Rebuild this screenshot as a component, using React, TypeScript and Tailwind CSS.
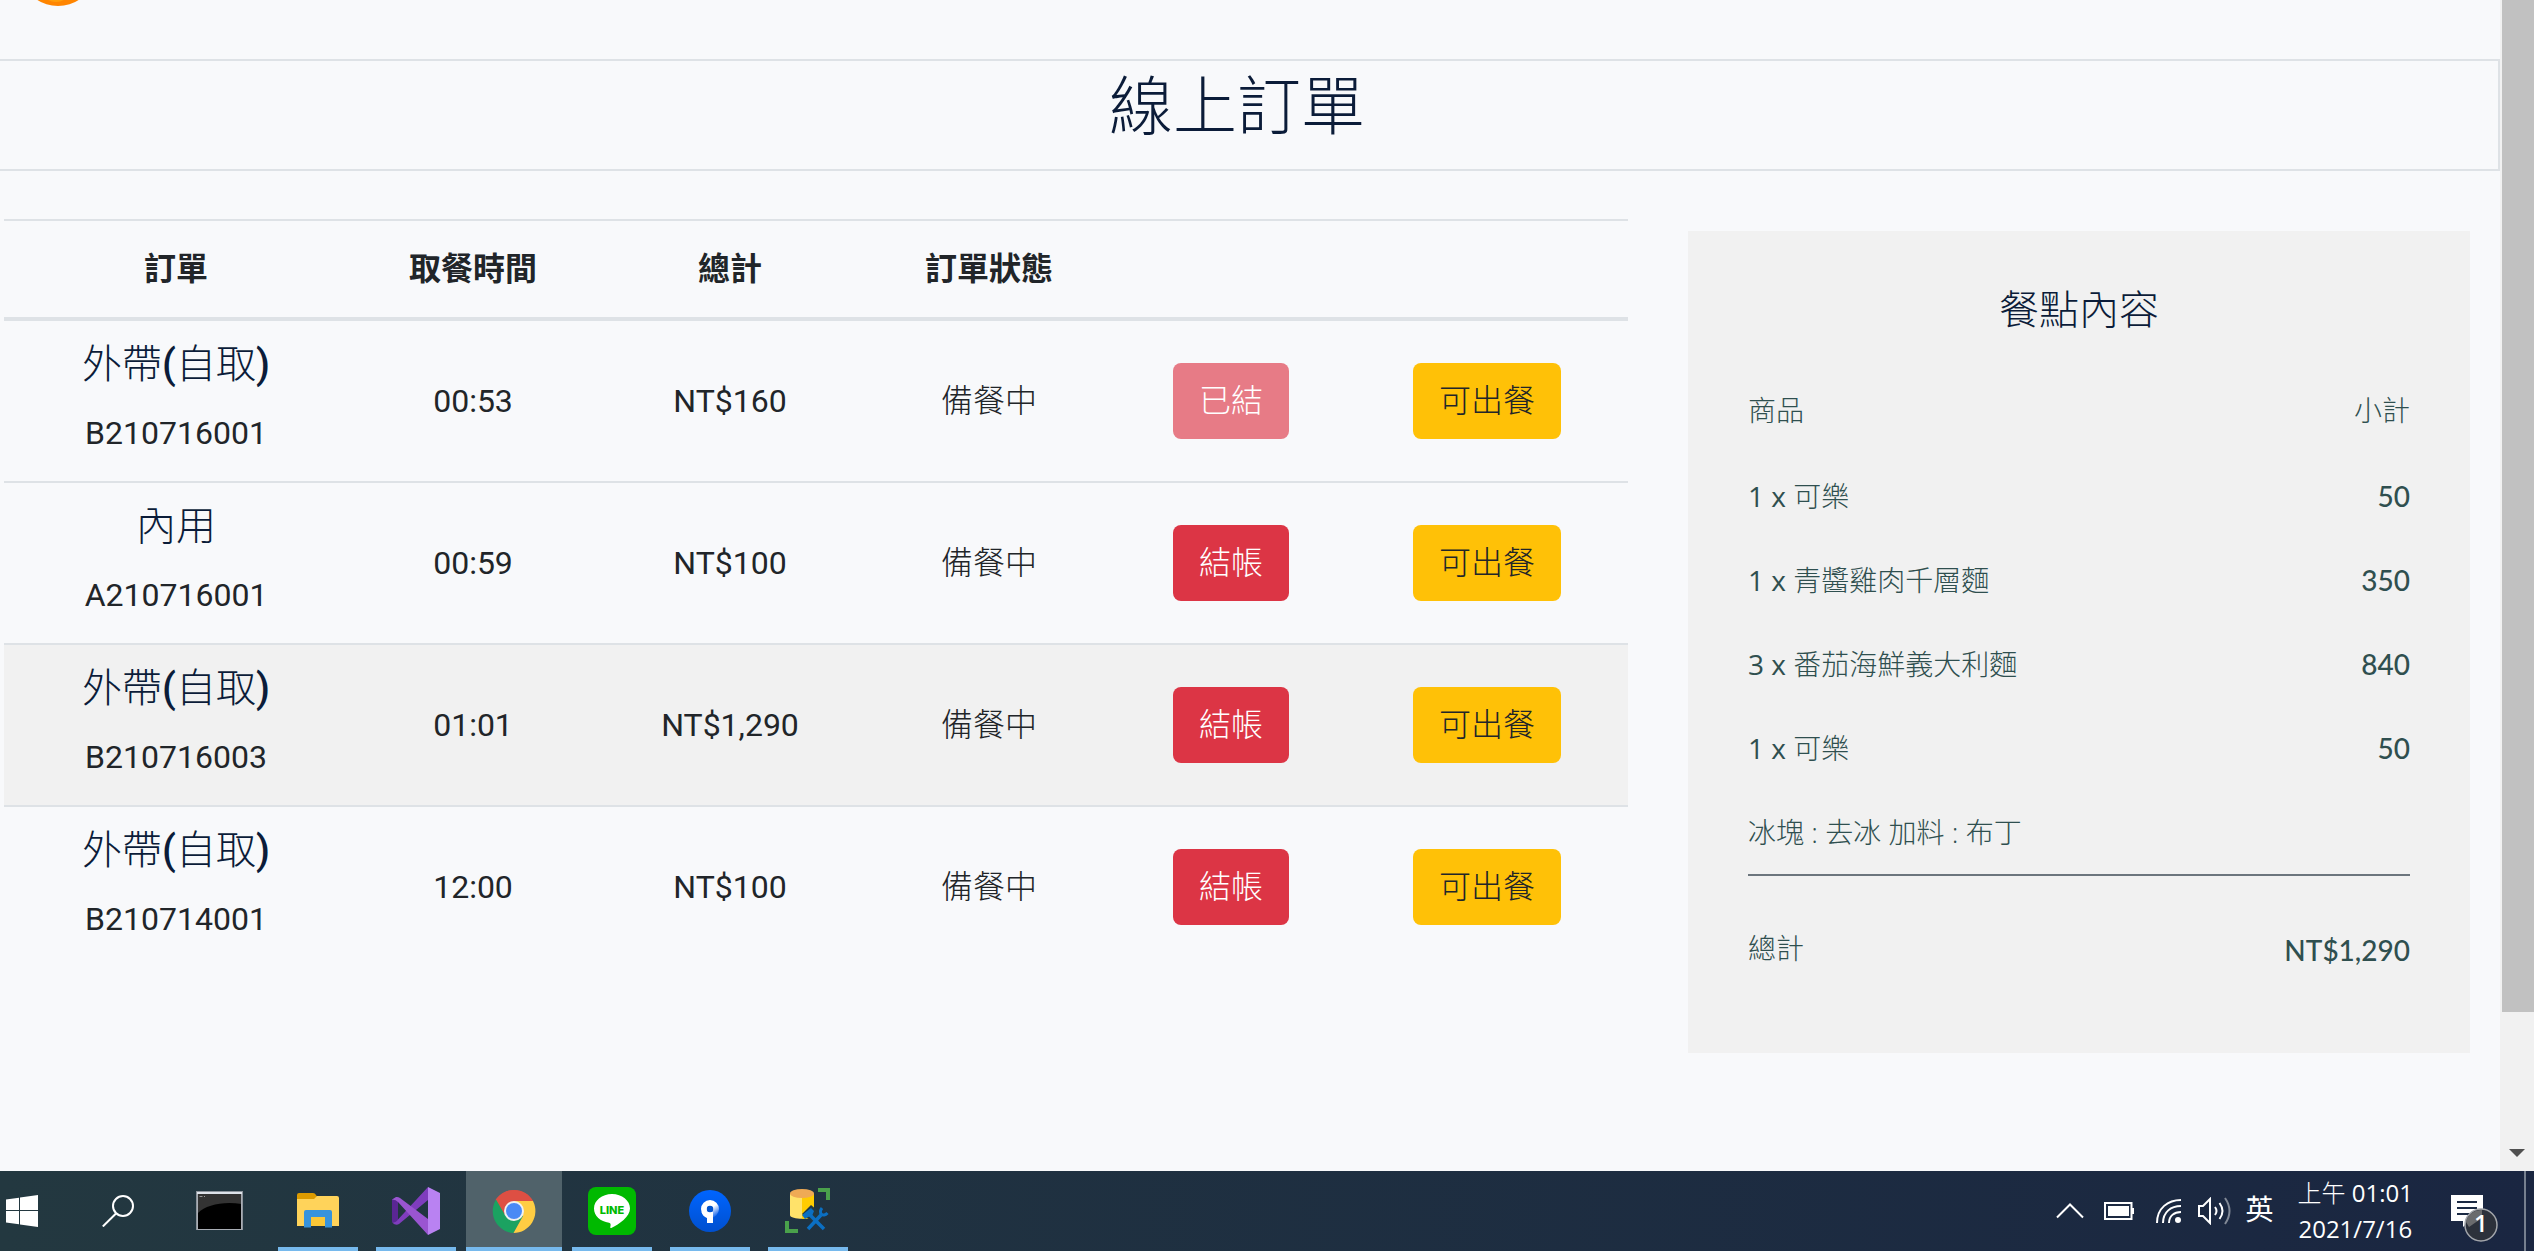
import React from "react";

const orders = [
  { type: "外帶(自取)", code: "B210716001", time: "00:53", total: "NT$160", paid: true },
  { type: "內用", code: "A210716001", time: "00:59", total: "NT$100" },
  { type: "外帶(自取)", code: "B210716003", time: "01:01", total: "NT$1,290", active: true },
  { type: "外帶(自取)", code: "B210714001", time: "12:00", total: "NT$100" },
];

const items = [
  { qty: 1, name: "可樂", price: "50" },
  { qty: 1, name: "青醬雞肉千層麵", price: "350" },
  { qty: 3, name: "番茄海鮮義大利麵", price: "840" },
  { qty: 1, name: "可樂", price: "50" },
];

function OrdersTable() {
  return (
    <table className="w-full table-fixed border-separate border-spacing-0 text-center text-[32px] leading-[48px] text-[#212529]">
      <colgroup>
        <col className="w-[344px]" />
        <col className="w-[250px]" />
        <col className="w-[264px]" />
        <col className="w-[254px]" />
        <col className="w-[230px]" />
        <col className="w-[282px]" />
      </colgroup>
      <thead>
        <tr>
          {["訂單", "取餐時間", "總計", "訂單狀態", "", ""].map((h, i) => (
            <th key={i} scope="col" className="h-[102px] border-t-2 border-b-4 border-[#dee2e6] p-0 font-bold">
              {h}
            </th>
          ))}
        </tr>
      </thead>
      <tbody className="[&>tr+tr>td]:border-t-2 [&>tr>td]:border-[#dee2e6] [&>tr>td]:p-0">
        {orders.map((o) => (
          <tr key={o.code} className={o.active ? "bg-[#f1f1f1]" : ""}>
            <td>
              <div className="py-6">
                <h5 className="mb-6 text-[40px] leading-10 font-light text-[#0b1c39]">
                  {o.type.split(/([()])/).map((part, i) => (
                    <span key={i} className={part === "(" || part === ")" ? "font-medium" : ""}>{part}</span>
                  ))}
                </h5>
                <p>{o.code}</p>
              </div>
            </td>
            <td>{o.time}</td>
            <td>{o.total}</td>
            <td className="font-light">備餐中</td>
            <td>
              <button
                type="button"
                disabled={o.paid}
                className={
                  o.paid
                    ? "h-[76px] rounded-lg bg-[#e77b86] px-[26px] font-light text-white"
                    : "h-[76px] rounded-lg bg-[#dc3545] px-[26px] font-light text-white"
                }
              >
                {o.paid ? "已結" : "結帳"}
              </button>
            </td>
            <td>
              <button type="button" className="h-[76px] rounded-lg bg-[#ffc107] px-[26px] font-light">
                可出餐
              </button>
            </td>
          </tr>
        ))}
      </tbody>
    </table>
  );
}

function OrderDetail() {
  return (
    <aside className="mt-3 bg-[#f1f1f1] px-[60px] pt-14 pb-[82px] text-[28px] leading-[42px] font-light text-[#2f4f4f]">
      <h4 className="mb-14 text-center text-[40px] leading-[48px] text-[#0b1c39]">餐點內容</h4>
      <div className="mb-[42px] flex justify-between">
        <span>商品</span>
        <span>小計</span>
      </div>
      {items.map((item, i) => (
        <div key={i} className="mb-[42px] flex justify-between">
          <span className="font-['Open_Sans','Noto_Sans_CJK_TC',sans-serif]">
            <span className="font-normal">{item.qty} x </span>
            {item.name}
          </span>
          <span className="font-[Lato,sans-serif] font-medium">{item.price}</span>
        </div>
      ))}
      <p className="border-b-2 border-[#6c757d] pb-[21px] font-['Open_Sans','Noto_Sans_CJK_TC',sans-serif]">冰塊 : 去冰 加料 : 布丁</p>
      <div className="mt-[53px] flex justify-between">
        <span>總計</span>
        <span className="font-[Lato,sans-serif] font-medium">NT$1,290</span>
      </div>
    </aside>
  );
}

const WindowsIcon = () => (
  <svg width="32" height="32" viewBox="0 0 32 32" fill="#fff">
    <path d="M0 4.6 13 2.8V15H0zM14 2.6 32 0v15H14zM0 16h13v13.2L0 27.4zM14 16h18v16l-18-2.6z" />
  </svg>
);

const SearchIcon = () => (
  <svg width="32" height="32" viewBox="0 0 32 32" fill="none" stroke="#fff" strokeWidth="2">
    <circle cx="21" cy="11" r="10" />
    <path d="M14 18.5.8 31.5" />
  </svg>
);

const TerminalIcon = () => (
  <svg width="48" height="40" viewBox="0 0 48 40">
    <rect x=".5" y=".5" width="46" height="38" fill="#000" stroke="#8d949c" />
    <path d="M2 3h43.500v10C27 10 10 14 2 22z" fill="#333" />
    <path d="M1 1h45v2H1z" fill="#dfe3ea" />
    <path d="M1.500 3v35.500h44V3" fill="none" stroke="#a9aeb5" />
    <path d="M3.500 5.500h3M8 5l1 1" stroke="#999" />
  </svg>
);

const FolderIcon = () => (
  <svg width="42" height="36" viewBox="0 0 42 36">
    <path d="M0 2q0-2 2-2h14q2 0 3 2l2 3-3 3H0z" fill="#dd9b00" />
    <path d="M0 6h17l3-3h20q2 0 2 2v28H0z" fill="#ffd35a" />
    <path d="M7 34V19q0-2 2-2h24q2 0 2 2v15.500h-7V24H14v10.500H7z" fill="#3793dc" />
    <path d="M14 24h14v9H14z" fill="#fbc736" />
  </svg>
);

const VisualStudioIcon = () => (
  <svg width="48" height="48" viewBox="0 0 48 48">
    <path d="M0 12 6 14v21l-1 2-5-2z" fill="#5a2694" />
    <path d="M36 0v13L7 37q-3 2-7-1.500 4 .5 6-3z" fill="#7f3dbd" />
    <path d="M0 12.500 4 10q2-.5 4 1l28 21v16L6 15q-2-2.500-6-2.500z" fill="#9a55d1" />
    <path d="m36 0 12 6v36l-12 6z" fill="#b982f2" />
  </svg>
);

const ChromeIcon = () => (
  <svg width="44" height="44" viewBox="0 0 44 44">
    <path d="M22 22 3.500 11A22 22 0 0 1 41 12z" fill="#de4f43" />
    <path d="M22 22 4 10.500A22 22 0 0 0 21.500 44L32 26z" fill="#1ba261" />
    <path d="M22 12h19A22 22 0 0 1 21.500 44L31 27z" fill="#ffcd43" />
    <path d="M22 12h19A22 22 0 0 0 4 10.500L13 26z" fill="#de4f43" />
    <circle cx="22" cy="22" r="10" fill="#f1f1f1" />
    <circle cx="22" cy="22" r="8" fill="#4a8af5" />
  </svg>
);

const LineIcon = () => (
  <svg width="48" height="48" viewBox="0 0 48 48">
    <rect width="48" height="48" rx="8" fill="#00b900" />
    <path d="M24 7C14 7 6 13.500 6 21.500c0 7.500 6.500 13 15 14.200 2 .5 1.800 2 1.300 4.300-.2 1 .5 1.300 1.500.8C31 37 42 30 42 21.500 42 13.500 34 7 24 7z" fill="#fff" />
    <text x="24" y="26.500" textAnchor="middle" fill="#00b900" className="font-[Inter,sans-serif] text-[11px] font-extrabold">LINE</text>
  </svg>
);

const SourcetreeIcon = () => (
  <svg width="42" height="42" viewBox="0 0 42 42">
    <defs>
      <linearGradient id="stBlue" x1="0" y1="0" x2="0" y2="1">
        <stop offset="0" stopColor="#0065ff" />
        <stop offset="1" stopColor="#0050cf" />
      </linearGradient>
      <linearGradient id="stFade" x1=".6" y1=".4" x2="1" y2="1">
        <stop offset="0" stopColor="#fff" />
        <stop offset="1" stopColor="#2b74ee" />
      </linearGradient>
    </defs>
    <circle cx="21" cy="21" r="21" fill="url(#stBlue)" />
    <circle cx="21" cy="19" r="6" fill="none" stroke="url(#stFade)" strokeWidth="6" />
    <path d="M18 22h6v11h-6zM12.500 22a9 9 0 0 0 5.500 6v-6z" fill="#fff" />
    <circle cx="21" cy="19" r="3.200" fill="#0052cc" />
  </svg>
);

const DatabaseIcon = () => (
  <svg width="46" height="46" viewBox="0 0 46 46">
    <path d="M5 6v21c0 5 24 5 24 0V6z" fill="#ffe26a" />
    <path d="M17 6h12v21q-4 4-12 4z" fill="#fc0" />
    <ellipse cx="17" cy="5.500" rx="12" ry="4.500" fill="#efaa55" />
    <path d="M33 2h10v10M2 33v10h11" fill="none" stroke="#4aa14b" strokeWidth="4" />
    <path d="M17 26 26 17l6 5 4 6-8 6z" fill="#233840" />
    <path d="m23 41 13-14M25 27l14 14" fill="none" stroke="#0b6fc2" strokeWidth="3.500" />
    <path d="m17 27 9-7 3 3-2 5-4 1-3 2z" fill="#0b6fc2" />
    <path d="M37 20c-4 5 1 10 5.500 5" fill="none" stroke="#0b6fc2" strokeWidth="3" />
  </svg>
);

const apps = [
  { name: "檔案總管", icon: <FolderIcon /> },
  { name: "Visual Studio", icon: <VisualStudioIcon /> },
  { name: "Google Chrome", icon: <ChromeIcon />, active: true },
  { name: "LINE", icon: <LineIcon /> },
  { name: "Sourcetree", icon: <SourcetreeIcon /> },
  { name: "SQL Server Management Studio", icon: <DatabaseIcon /> },
];

function Taskbar() {
  return (
    <footer className="flex h-20 shrink-0 items-center justify-between bg-linear-to-r from-[#233840] to-[#1a2641] text-white">
      <nav className="flex h-full items-stretch gap-0.5">
        <button type="button" aria-label="開始" className="flex w-[72px] items-center pl-1.5"><WindowsIcon /></button>
        <button type="button" aria-label="搜尋" className="flex w-24 items-center justify-center pr-2"><SearchIcon /></button>
        <button type="button" aria-label="命令提示字元" className="flex w-24 items-center justify-center"><TerminalIcon /></button>
        {apps.map((a) => (
          <button key={a.name} type="button" aria-label={a.name} className={a.active ? "flex w-24 flex-col items-center bg-[#50626a]" : "flex w-24 flex-col items-center px-2"}>
            <span className="flex flex-1 items-center pt-1">{a.icon}</span>
            <span className="h-1 w-full bg-[#76b9ed]" />
          </button>
        ))}
      </nav>
      <div className="flex h-full items-center">
        <button type="button" aria-label="顯示隱藏的圖示" className="mr-5">
          <svg width="28" height="16" viewBox="0 0 28 16" fill="none" stroke="#fff" strokeWidth="2"><path d="m1 14.500 13-13 13 13" /></svg>
        </button>
        <svg className="mr-[21px]" width="31" height="18" viewBox="0 0 31 18"><path d="M1 1h26.500v16H1z" fill="none" stroke="#fff" strokeWidth="2" /><path d="M4 4h21v10H4zM28 6h2v6h-2z" fill="#fff" /></svg>
        <svg className="mr-4" width="26" height="26" viewBox="0 0 26 26" fill="none" stroke="#fff" strokeWidth="2">
          <path d="M1 25C1 10 12 2 25 2M7 25C7 14 15 8 25 8M13 25c0-7 5-11 12-11" />
          <circle cx="22" cy="22" r="3" fill="#fff" stroke="none" />
        </svg>
        <svg className="mr-3.5" width="34" height="28" viewBox="0 0 34 28" fill="none" stroke="#fff" strokeWidth="2">
          <path d="M1 9h4l7-7v24l-7-7H1zM17 10q3 4 0 8M21.500 6q6 8 0 16" />
          <path d="M27 1q9 13 0 26" opacity=".45" />
        </svg>
        <span className="mr-6 text-[28px] leading-none">英</span>
        <div className="mr-[38px] text-center font-['Open_Sans','Noto_Sans_CJK_TC',sans-serif] text-2xl leading-9">
          <p><span className="font-light">上午</span> 01:01</p>
          <p>2021/7/16</p>
        </div>
        <button type="button" aria-label="通知，1 則新訊息" className="relative mt-4 mr-[25px] h-12 w-12">
          <svg width="48" height="48" viewBox="0 0 48 48">
            <path d="M0 0h32v26H18l-6 6v-6H0z" fill="#fff" />
            <path d="M6 7h20M6 13h20M6 19h14" stroke="#1b2a44" strokeWidth="2" />
            <circle cx="30" cy="30" r="16" fill="#2c313b" stroke="#a3a6ab" strokeWidth="1.500" />
            <path d="M15 27a15 15 0 0 1 16-12v8l-13 9z" fill="#7a7a7a" opacity=".8" />
          </svg>
          <span className="absolute top-4 left-[23px] font-['Open_Sans',sans-serif] text-2xl leading-6 font-semibold">1</span>
        </button>
        <div className="mr-2 h-full w-0.5 bg-[#76808f]" />
      </div>
    </footer>
  );
}

export default function App() {
  return (
    <div className="flex h-screen flex-col overflow-hidden bg-[#f8f9fb] font-[Roboto,'Noto_Sans_CJK_TC',sans-serif]">
      <div className="flex min-h-0 flex-1">
        <main className="min-w-0 flex-1 overflow-hidden">
          <header className="h-[59px] pl-[34px]">
            <svg width="48" height="6" viewBox="0 0 48 6"><ellipse cx="24" cy="-16" rx="30" ry="22" fill="#ff8500" /><ellipse cx="22" cy="-10" rx="14" ry="12" fill="#ff9e0a" /></svg>
          </header>
          <h1 className="h-28 border-2 border-l-0 border-[#dee2e6] pt-2 pr-6 text-center text-[64px] leading-[78px] font-light text-[#0b1c39]">線上訂單</h1>
          <div className="grid grid-cols-[1624fr_782fr] items-start gap-[60px] pt-12 pr-[30px] pl-1">
            <OrdersTable />
            <OrderDetail />
          </div>
        </main>
        <div className="flex w-[34px] flex-col justify-between bg-[#f1f1f1] pl-0.5">
          <div className="h-[1012px] bg-[#c1c1c1]" />
          <svg className="mb-3.5 ml-[7px]" width="16" height="8" viewBox="0 0 16 8"><path d="M0 0h16l-8 8z" fill="#505050" /></svg>
        </div>
      </div>
      <Taskbar />
    </div>
  );
}
